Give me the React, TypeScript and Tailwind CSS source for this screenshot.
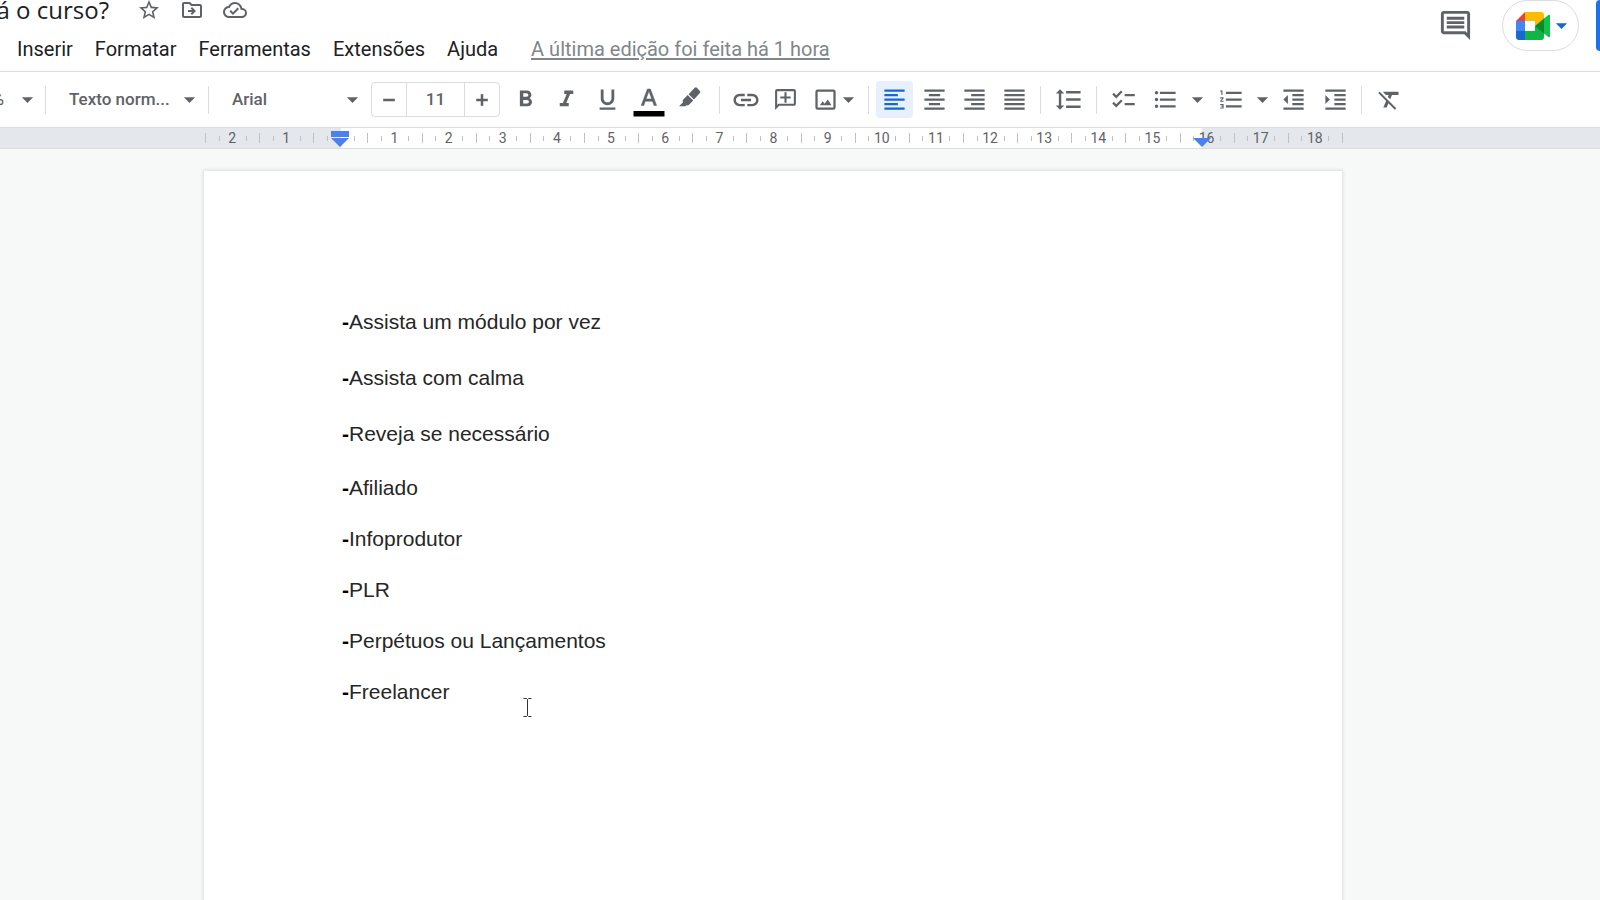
import React from 'react';
import { Minus, Plus } from 'lucide-react';
import {
  MdArrowDropDown,
  MdChecklist,
  MdFormatAlignCenter,
  MdFormatAlignJustify,
  MdFormatAlignLeft,
  MdFormatAlignRight,
  MdFormatBold,
  MdFormatClear,
  MdFormatIndentDecrease,
  MdFormatIndentIncrease,
  MdFormatItalic,
  MdFormatLineSpacing,
  MdFormatListBulleted,
  MdFormatListNumbered,
  MdFormatUnderlined,
  MdInsertLink,
  MdOutlineAddComment,
  MdOutlineCloudDone,
  MdOutlineComment,
  MdOutlineDriveFileMove,
  MdStarBorder,
} from 'react-icons/md';

const menus = ['Inserir', 'Formatar', 'Ferramentas', 'Extensões', 'Ajuda'];

const spacedLines = [
  'Assista um módulo por vez',
  'Assista com calma',
  'Reveja se necessário',
];

const tightLines = ['Afiliado', 'Infoprodutor', 'PLR', 'Perpétuos ou Lançamentos', 'Freelancer'];

// centimetre labels, from the left page edge to the right one
const rulerMarks = Array.from({ length: 21 }, (_, i) => i - 2);

const icon = 'size-[27px] shrink-0';

interface ToolButtonProps {
  label: string;
  active?: boolean;
  children: React.ReactNode;
}

const ToolButton: React.FC<ToolButtonProps> = ({ label, active, children }) => (
  <button
    type="button"
    aria-label={label}
    aria-pressed={active}
    className={`flex h-[37px] w-[37px] shrink-0 items-center justify-center rounded-sm ${
      active ? 'bg-[#e8f0fe] text-[#1967d2]' : ''
    }`}
  >
    {children}
  </button>
);

const ArrowButton: React.FC<{ label: string }> = ({ label }) => (
  <button type="button" aria-label={label} className="flex h-[37px] w-4 shrink-0 items-center justify-center">
    <MdArrowDropDown className={icon} />
  </button>
);

const Divider = () => <div className="h-7 w-px shrink-0 bg-[#dadce0]" />;

const TextColorIcon = () => (
  <svg viewBox="0 0 32 37" className="h-[37px] w-8 shrink-0">
    <path
      fill="currentColor"
      stroke="currentColor"
      strokeWidth=".5"
      d="M14.4 8 8.2 24.4h2.6l1.5-4.2h7.2l1.5 4.2h2.6L17.4 8h-3Zm-1.3 9.9 2.8-7.6 2.8 7.6h-5.6Z"
    />
    <path fill="#000" d="M.5 30h31v5.5H.5z" />
  </svg>
);

const HighlightIcon = () => (
  <svg viewBox="0 0 24 24" className={icon} fill="currentColor">
    <path d="M18.6 1.6 21.4 4.600c.4.400.4.900 0 1.300L16 11.900 11.200 7.300l5.400-5.700c.6-.6 1.400-.6 2 0Z" />
    <path d="m10.400 8.100 4.900 4.700-3.500 3.700c-.8.8-1.600.9-2.500.7L8.300 18H2.700l3.500-3.600c-.5-1-.2-1.900.5-2.600l3.700-3.700Z" />
  </svg>
);

const ImageIcon = () => (
  <svg viewBox="0 0 24 24" className={icon} fill="currentColor">
    <path d="M19 3H5a2 2 0 0 0-2 2v14a2 2 0 0 0 2 2h14a2 2 0 0 0 2-2V5a2 2 0 0 0-2-2Zm0 16H5V5h14v14Z" />
    <path d="m7 17 2.500-3.500 1.800 2.200 2.700-3.700 3.300 5H7Z" />
  </svg>
);

const MeetLogo = () => (
  <svg viewBox="0 0 34 28" className="h-7 w-[34px] shrink-0">
    <path fill="#ea4335" d="M0 9 9 0v9H0Z" />
    <path fill="#fbbc04" d="M9 0h16a3 3 0 0 1 3 3v7l-9 5V9H9V0Z" />
    <path fill="#4285f4" d="M0 9h9v10H0z" />
    <path fill="#1967d2" d="M0 19h9v9H3a3 3 0 0 1-3-3v-6Z" />
    <path fill="#12b347" d="M9 19h10v-5l9 4v7a3 3 0 0 1-3 3H9v-9Z" />
    <path fill="#12c24c" d="M27 7.200 32.400 2.900c.7-.5 1.600-.1 1.600.8v20.600c0 .9-.9 1.300-1.600.8L27 20.800V7.200Z" />
    <path fill="#0b8a2c" d="M19 14 28 6.400v15.200L19 14Z" />
  </svg>
);

const Header = () => (
  <header className="flex h-[72px] items-start justify-between border-b border-[#dadce0]">
    <div>
      <div className="flex h-5 items-center">
        <div className="flex w-[109px] justify-end overflow-hidden">
          <h1 className="font-['Open_Sans',sans-serif] text-[24px] leading-7 whitespace-nowrap text-[#202124]">
            á o curso?
          </h1>
        </div>
        <div className="ml-7 flex items-center gap-[19px] text-[#5f6368]">
          <button type="button" aria-label="Marcar com estrela">
            <MdStarBorder className="size-6" />
          </button>
          <button type="button" aria-label="Mover">
            <MdOutlineDriveFileMove className="size-6" />
          </button>
          <button type="button" aria-label="Status do documento">
            <MdOutlineCloudDone className="size-6" />
          </button>
        </div>
      </div>
      <nav className="flex items-center pt-[17px] pl-[17px] font-[Roboto,sans-serif] text-[20px] leading-6 text-[#202124]">
        <div className="flex gap-[22px]">
          {menus.map((menu) => (
            <button key={menu} type="button">
              {menu}
            </button>
          ))}
        </div>
        <a href="#" className="ml-[33px] text-[#80868b] underline underline-offset-2">
          A última edição foi feita há 1 hora
        </a>
      </nav>
    </div>

    <div className="flex items-center">
      <button type="button" aria-label="Abrir histórico de comentários" className="mr-[29px] text-[#5f6368]">
        <MdOutlineComment className="size-[35px]" />
      </button>
      <button
        type="button"
        aria-label="Participar de uma chamada"
        className="mr-[17px] flex h-[51px] w-[77px] items-center justify-center rounded-full border border-[#dadce0] pl-[6px]"
      >
        <MeetLogo />
        <MdArrowDropDown className="-mr-1 -ml-[2px] size-[27px] text-[#1967d2]" />
      </button>
      <button type="button" aria-label="Compartilhar" className="h-[51px] w-1 rounded-l bg-[#1a73e8]" />
    </div>
  </header>
);

const Toolbar = () => (
  <div className="flex h-14 items-center border-b border-[#dadce0] font-[Roboto,sans-serif] text-[17px] font-medium text-[#5f6368]">
    <button type="button" aria-label="Zoom" className="flex h-[37px] w-[35px] items-center gap-[10px]">
      <span className="flex w-1 shrink-0 justify-end overflow-hidden">%</span>
      <MdArrowDropDown className={icon} />
    </button>
    <div className="ml-[10px] flex items-center">
      <Divider />
      <label className="ml-[23px] flex items-center">
        <select aria-label="Estilos" className="w-[107px] appearance-none bg-transparent">
          <option>Texto norm...</option>
        </select>
        <MdArrowDropDown className={icon} />
      </label>
    </div>
    <div className="ml-[5px] flex items-center">
      <Divider />
      <label className="ml-[23px] flex items-center">
        <select aria-label="Fonte" className="w-[107px] appearance-none bg-transparent">
          <option>Arial</option>
        </select>
        <MdArrowDropDown className={icon} />
      </label>
    </div>

    <div className="ml-[5px] flex h-[35px] w-[129px] shrink-0 rounded-sm border border-[#dadce0]">
      <button type="button" aria-label="Diminuir tamanho" className="flex flex-1 items-center justify-center">
        <Minus size={20} strokeWidth={3} strokeLinecap="butt" />
      </button>
      <input
        type="text"
        aria-label="Tamanho da fonte"
        defaultValue="11"
        className="w-[59px] border-x border-[#dadce0] text-center"
      />
      <button type="button" aria-label="Aumentar tamanho" className="flex flex-1 items-center justify-center">
        <Plus size={20} strokeWidth={3} strokeLinecap="butt" />
      </button>
    </div>

    <div className="mr-[11px] ml-[7px] flex items-center gap-1">
      <ToolButton label="Negrito">
        <MdFormatBold className={icon} />
      </ToolButton>
      <ToolButton label="Itálico">
        <MdFormatItalic className={icon} />
      </ToolButton>
      <ToolButton label="Sublinhado">
        <MdFormatUnderlined className={icon} />
      </ToolButton>
      <ToolButton label="Cor do texto">
        <TextColorIcon />
      </ToolButton>
      <ToolButton label="Cor de destaque">
        <HighlightIcon />
      </ToolButton>
    </div>
    <Divider />

    <div className="mr-3 ml-[7px] flex items-center gap-[3px]">
      <ToolButton label="Inserir link">
        <MdInsertLink className="size-[30px] shrink-0" />
      </ToolButton>
      <ToolButton label="Adicionar comentário">
        <MdOutlineAddComment className="size-[25px] shrink-0 -scale-x-100" />
      </ToolButton>
      <ToolButton label="Inserir imagem">
        <ImageIcon />
      </ToolButton>
      <div className="-ml-[7px]">
        <ArrowButton label="Opções de imagem" />
      </div>
    </div>
    <Divider />

    <div className="mx-[7px] flex items-center gap-[3px]">
      <ToolButton label="Alinhar à esquerda" active>
        <MdFormatAlignLeft className={icon} />
      </ToolButton>
      <ToolButton label="Centralizar">
        <MdFormatAlignCenter className={icon} />
      </ToolButton>
      <ToolButton label="Alinhar à direita">
        <MdFormatAlignRight className={icon} />
      </ToolButton>
      <ToolButton label="Justificar">
        <MdFormatAlignJustify className={icon} />
      </ToolButton>
    </div>
    <Divider />

    <div className="mx-[9px]">
      <ToolButton label="Espaçamento entre linhas">
        <MdFormatLineSpacing className="size-[29px] shrink-0" />
      </ToolButton>
    </div>
    <Divider />

    <div className="mr-[7px] ml-2 flex items-center gap-[5px]">
      <ToolButton label="Lista de verificação">
        <MdChecklist className={icon} />
      </ToolButton>
      <ToolButton label="Lista com marcadores">
        <MdFormatListBulleted className={icon} />
      </ToolButton>
      <ArrowButton label="Opções de marcadores" />
      <div className="ml-[3px] flex items-center gap-[4px]">
        <ToolButton label="Lista numerada">
          <MdFormatListNumbered className={icon} />
        </ToolButton>
        <ArrowButton label="Opções de numeração" />
      </div>
      <ToolButton label="Diminuir recuo">
        <MdFormatIndentDecrease className={icon} />
      </ToolButton>
      <ToolButton label="Aumentar recuo">
        <MdFormatIndentIncrease className={icon} />
      </ToolButton>
    </div>
    <Divider />

    <div className="ml-[9px]">
      <ToolButton label="Limpar formatação">
        <MdFormatClear className={icon} />
      </ToolButton>
    </div>
  </div>
);

const Ruler = () => (
  <div className="relative h-[21px] border-b border-[#dadce0] font-[Roboto,sans-serif]">
    {/* page margins are shaded, the writable width is white */}
    <div className="absolute inset-0 flex">
      <div className="w-[341px] bg-[#e4e7eb]" />
      <div className="flex-1 bg-white" />
      <div className="w-[398px] bg-[#e4e7eb]" />
    </div>
    <div className="relative mr-[257px] ml-[205px] flex h-full items-center">
      {rulerMarks.map((mark) => (
        <div key={mark} className="grid flex-1 grid-cols-4 items-center">
          <span className="col-start-1 row-start-1 h-[10px] w-px bg-[#bdc1c6]" />
          <span className="col-start-2 row-start-1 h-[5px] w-px bg-[#bdc1c6]" />
          <span className="col-start-4 row-start-1 h-[5px] w-px bg-[#bdc1c6]" />
          <span className="col-span-2 col-start-2 row-start-1 text-center text-[14px] leading-5 text-[#5f6368]">
            {mark === 0 ? '' : Math.abs(mark)}
          </span>
        </div>
      ))}
      <span className="h-[10px] w-px bg-[#bdc1c6]" />
    </div>
    <svg viewBox="0 0 18 16" className="absolute top-[3px] left-[331px] h-4 w-[18px]">
      <path fill="#4a80f0" d="M0 0h18v6H0zM0 7h18L9 16z" />
    </svg>
    <svg viewBox="0 0 18 9" className="absolute top-[10px] right-[389px] h-[9px] w-[18px]">
      <path fill="#4a80f0" d="M0 0h18L9 9z" />
    </svg>
  </div>
);

const Line: React.FC<{ text: string; className: string }> = ({ text, className }) => (
  <p className={className}>
    <span className="font-bold text-black">-</span>
    {text}
  </p>
);

export default function App() {
  return (
    <div className="flex h-screen flex-col overflow-hidden bg-white">
      <Header />
      <Toolbar />
      <Ruler />
      <main className="relative flex flex-1 flex-col bg-[#f7f9f9] pt-[22px] pr-[258px] pl-[204px]">
        <article className="flex-1 bg-white pt-[123px] pl-[138px] font-['Liberation_Sans',Arial,sans-serif] text-[21px] text-[#262626] shadow-[0_0_3px_1px_rgba(60,64,67,0.15)]">
          {spacedLines.map((text) => (
            <Line key={text} text={text} className="leading-[56px]" />
          ))}
          {tightLines.map((text) => (
            <Line key={text} text={text} className="leading-[51px]" />
          ))}
        </article>
        {/* text cursor */}
        <svg viewBox="0 0 9 19" className="absolute top-[549px] left-[523px] h-[19px] w-[9px]" fill="none" stroke="#333">
          <path d="M.5.5h3l1 1 1-1h3M4.5 1.5v16M.5 18.5h3l1-1 1 1h3" />
        </svg>
      </main>
    </div>
  );
}
